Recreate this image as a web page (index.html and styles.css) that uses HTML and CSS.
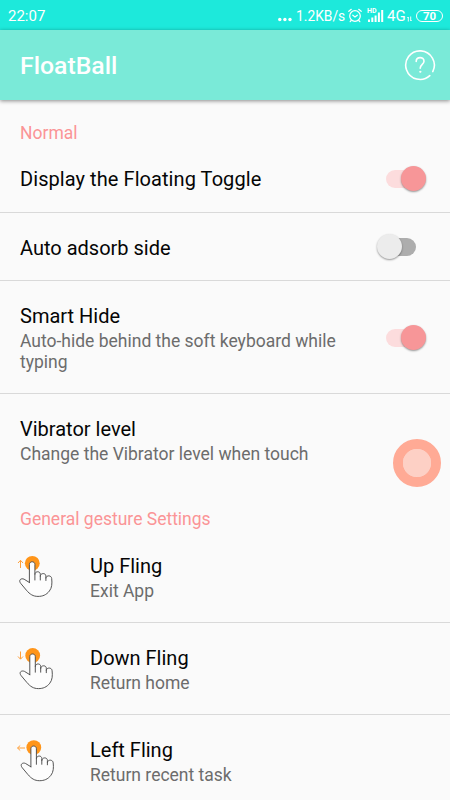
FILE: index.html
```html
<!DOCTYPE html>
<html lang="en">
<head>
<meta charset="utf-8">
<title>FloatBall</title>
<link rel="stylesheet" href="styles.css">
</head>
<body>
<svg class="defs" width="0" height="0">
  <symbol id="hand" viewBox="0 0 36 44">
    <circle cx="15.3" cy="9.3" r="7.4" fill="#ff9519"/>
    <path d="M12.4 27V10.4C12.4 6.9 17.9 6.9 17.9 10.4V20.2C17.9 16.9 23.3 16.9 23.3 20.2V22.2C23.3 18.6 28.9 18.8 28.9 22V24C29.2 20.8 34.6 21.2 34.7 24.6C35.2 29.3 35 33.8 32.4 37C29.3 41 25.6 42.4 21 42.4C16.1 42.4 12.9 40.3 9.4 36.2L3.8 29.5C1.1 26.2 4 23.8 7.1 25.2L12.4 28.5Z" fill="#fdfdfd"/>
    <path d="M12.4 28.5V10.4C12.4 6.9 17.9 6.9 17.9 10.4V26M17.9 20.2C17.9 16.9 23.3 16.9 23.3 20.2V26M23.3 22.2C23.3 18.6 28.9 18.8 28.9 22V26.5M28.9 24C29.2 20.8 34.6 21.2 34.7 24.6C35.2 29.3 35 33.8 32.4 37C29.3 41 25.6 42.4 21 42.4C16.1 42.4 12.9 40.3 9.4 36.2L3.8 29.5C1.1 26.2 4 23.8 7.1 25.2L12.4 28.5" fill="none" stroke="#4c4c4c" stroke-width=".95" stroke-linejoin="round" stroke-linecap="round"/>
  </symbol>
</svg>
<div class="status">
  <span class="clock">22:07</span>
  <div class="indicators">
    <svg class="dots" width="14" height="14" viewBox="0 0 14 14" fill="#fff"><circle cx="1.8" cy="10.5" r="1.7"/><circle cx="6.9" cy="10.5" r="1.7"/><circle cx="12" cy="10.5" r="1.7"/></svg>
    <span class="speed">1.2KB/s</span>
    <svg class="alarm" width="14" height="15" viewBox="0 0 14 15" fill="none" stroke="#fff" stroke-width="1.2" stroke-linecap="round"><circle cx="7" cy="8" r="5.3"/><path d="M4.8 7.2L7 9L9.3 7.2M.8 3.3L3.3 1.3M13.2 3.3L10.7 1.3M3.2 12.5L2.2 13.7M10.8 12.5L11.8 13.7"/></svg>
    <div class="signal">
      <span class="hd">HD</span>
      <svg width="17" height="14" viewBox="0 0 17 14" fill="#fff"><path d="M1 10.5h2V13H1zM4.3 8.5h2V13h-2zM7.6 6.5h2V13h-2zM10.9 3.5h2V13h-2zM14.2 1h2v12h-2z"/></svg>
    </div>
    <span class="network">4G</span>
    <svg class="data" width="5" height="6" viewBox="0 0 5 6" fill="none" stroke="#fff" stroke-width=".9"><path d="M1.3 5.5V1L.3 2M3.7 .5v4.5l1-1"/></svg>
    <span class="battery"><b>70</b></span>
  </div>
</div>
<header class="bar">
  <h1>FloatBall</h1>
  <svg width="32" height="32" viewBox="0 0 32 32" fill="none" stroke="#fff" stroke-width="1.6" stroke-linecap="round"><path d="M25.8 26.6A14.3 14.3 0 1 1 28.8 22.6"/><path d="M12.2 12.4C12.2 7.3 20 7.4 20 12.2C20 15.3 16.2 15.4 16.2 19.2"/><circle cx="16.2" cy="22.8" r=".6" fill="#fff" stroke-width="1"/></svg>
</header>
<main>
  <h2>Normal</h2>
  <section class="row toggle">
    <div class="text"><h3>Display the Floating Toggle</h3></div>
    <span class="switch on"></span>
  </section>
  <section class="row auto">
    <div class="text"><h3>Auto adsorb side</h3></div>
    <span class="switch"></span>
  </section>
  <section class="row smart">
    <div class="text"><h3>Smart Hide</h3><p>Auto-hide behind the soft keyboard while typing</p></div>
    <span class="switch on"></span>
  </section>
  <section class="row vibrator">
    <div class="text"><h3>Vibrator level</h3><p>Change the Vibrator level when touch</p></div>
  </section>
  <h2 class="gesture-title">General gesture Settings</h2>
  <section class="row gesture">
    <svg class="icon" width="40" height="46" viewBox="0 0 40 46"><use href="#hand" x="0" y="1" width="36" height="44"/><path d="M3.5 15V7.5M1 10L3.5 7.3L6 10" class="arrow"/></svg>
    <div class="text"><h3>Up Fling</h3><p>Exit App</p></div>
  </section>
  <section class="row gesture">
    <svg class="icon" width="40" height="46" viewBox="0 0 40 46"><use href="#hand" x=".4" y="1.2" width="36" height="44"/><path d="M3.5 6.5V14M1 11.5L3.5 14.2L6 11.5" class="arrow"/></svg>
    <div class="text"><h3>Down Fling</h3><p>Return home</p></div>
  </section>
  <section class="row gesture">
    <svg class="icon" width="40" height="46" viewBox="0 0 40 46"><use href="#hand" x="1.5" y="1.3" width="36" height="44"/><path d="M8 11H.7M3.2 8.5L.5 11L3.2 13.5" class="arrow"/></svg>
    <div class="text"><h3>Left Fling</h3><p>Return recent task</p></div>
  </section>
</main>
<div class="float-ball"></div>
</body>
</html>
```

FILE: styles.css
```css
* { box-sizing: border-box; }
body {
  margin: 0;
  height: 800px;
  overflow: hidden;
  position: relative;
  background: #fafafa;
  font-family: Roboto, sans-serif;
}
h1, h2, h3, p { margin: 0; font-weight: 400; }
.defs { position: absolute; }
.status {
  height: 30px;
  padding: 1px 7px 0 8px;
  display: flex;
  align-items: center;
  justify-content: space-between;
  background: #1de9db;
  color: #fff;
  font-size: 15px;
}
.indicators { display: flex; align-items: center; }
.dots { margin: 1px 4px 0 0; }
.speed { font-size: 13.8px; width: 52px; white-space: nowrap; }
.signal { position: relative; display: flex; margin-left: 5px; }
.hd { position: absolute; left: 0; top: 0; font-size: 7px; line-height: 5px; font-weight: 700; }
.network { margin-left: 3px; font-size: 15px; width: 20px; }
.data { margin: 6px 4px 0 0; }
.battery {
  width: 27px;
  height: 12px;
  border: 1px solid #fff;
  border-radius: 6px;
  font-size: 11.5px;
  line-height: 10px;
  text-align: center;
}
.bar {
  position: relative;
  height: 70px;
  padding: 0 14px 0 20px;
  display: flex;
  align-items: center;
  justify-content: space-between;
  background: #7aead8;
  color: #fff;
  box-shadow: 0 1px 4px rgba(0, 0, 0, .45);
}
.bar h1 { font-size: 24.8px; font-weight: 500; line-height: 30px; padding-top: 2px; }
h2 {
  height: 46px;
  padding: 23px 20px 0;
  font-size: 17.5px;
  line-height: 21px;
  color: #fa9496;
}
.row {
  display: flex;
  align-items: center;
  padding: 0 20px;
  border-bottom: 1px solid #d9d9d9;
}
.toggle { height: 67px; }
.auto { height: 68px; }
.smart { height: 113px; }
.auto .text, .smart .text { padding-top: 2px; }
.toggle h3 { letter-spacing: .07px; }
.vibrator { height: 93px; border-bottom: 0; }
.gesture { height: 92px; }
.gesture .text { padding-top: 3px; }
.gesture-title { height: 44px; padding-top: 22px; }
.text { flex: 1; }
h3 { font-size: 20px; line-height: 24px; color: #050505; }
p { font-size: 17.5px; line-height: 21px; margin-top: 3px; color: #6c6c6c; }
.smart .text { padding-right: 30px; }
.icon { width: 40px; height: 46px; margin: -2px 33px 0 -3px; }
.arrow { fill: none; stroke: #ffa03b; stroke-width: 1; }
.switch {
  position: relative;
  width: 50px;
  height: 26px;
  flex: none;
}
.smart .switch { margin-top: 2px; }
.switch::before {
  content: "";
  position: absolute;
  left: 6px;
  top: 4px;
  width: 35px;
  height: 18px;
  border-radius: 9px;
  background: #adadad;
}
.switch::after {
  content: "";
  position: absolute;
  left: -4px;
  top: 0;
  width: 25px;
  height: 25px;
  border-radius: 50%;
  background: #ececec;
  box-shadow: 0 1px 2px rgba(0, 0, 0, .4);
}
.auto .switch::before { left: 1px; }
.auto .switch::after { left: -3.5px; }
.switch.on::before { background: #fcdcdd; }
.switch.on::after { left: 21px; background: #f79698; }
.float-ball {
  position: absolute;
  left: 393px;
  top: 439px;
  width: 48px;
  height: 48px;
  border: 10px solid #ffaa95;
  border-radius: 50%;
  background: #fdd0c5;
  background-clip: padding-box;
}
```
